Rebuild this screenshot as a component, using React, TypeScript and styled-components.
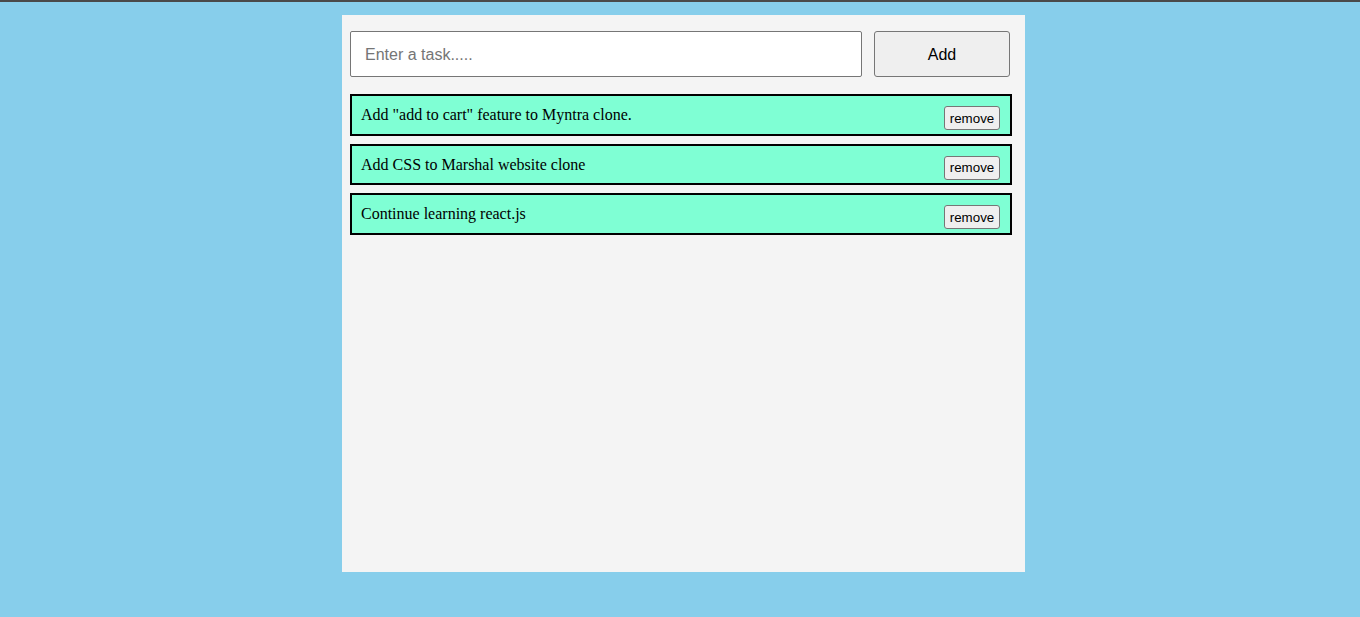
import React, { useState } from "react";
import styled, { createGlobalStyle } from "styled-components";

const GlobalStyle = createGlobalStyle`
  html, body {
    margin: 0;
    padding: 0;
    background: #87ceeb;
  }
  body {
    font-family: "Liberation Serif", "Times New Roman", serif;
  }
`;

const Page = styled.div`
  min-height: 617px;
  box-sizing: border-box;
  border-top: 2px solid #4a4a4a;
  padding-top: 13px;
  background: #87ceeb;
`;

const Panel = styled.div`
  width: 683px;
  height: 557px;
  margin-left: 342px;
  box-sizing: border-box;
  background: #f4f4f4;
  padding: 16px 15px 0 8px;
`;

const Form = styled.form`
  display: flex;
  gap: 12px;
  margin-bottom: 17px;
`;

const Input = styled.input`
  width: 512px;
  height: 46px;
  box-sizing: border-box;
  border: 1px solid #767676;
  border-radius: 2px;
  padding: 2px 14px 0;
  font-family: "Liberation Sans", Arial, sans-serif;
  font-size: 16px;
  color: #000;
  background: #fff;
  outline: none;
  &::placeholder {
    color: #757575;
  }
`;

const AddButton = styled.button`
  width: 136px;
  height: 46px;
  box-sizing: border-box;
  border: 1px solid #767676;
  border-radius: 3px;
  background: #efefef;
  padding: 2px 0 0;
  font-family: "Liberation Sans", Arial, sans-serif;
  font-size: 16px;
  color: #000;
  cursor: pointer;
`;

const List = styled.ul`
  list-style: none;
  margin: 0;
  padding: 0;
  width: 662px;
  display: flex;
  flex-direction: column;
  gap: 8px;
`;

const Item = styled.li`
  display: flex;
  justify-content: space-between;
  align-items: flex-start;
  box-sizing: border-box;
  border: 2px solid #000;
  background: #7fffd4;
  padding: 0 10px 3.5px 9px;
`;

const TaskText = styled.span`
  margin-top: 10px;
  font-family: "Liberation Serif", "Times New Roman", serif;
  font-size: 16px;
  line-height: 18px;
  color: #000;
`;

const RemoveButton = styled.button`
  margin-top: 10px;
  height: 24px;
  width: 56px;
  box-sizing: border-box;
  padding: 0;
  border: 1px solid #767676;
  border-radius: 3px;
  background: #efefef;
  font-family: "Liberation Sans", Arial, sans-serif;
  font-size: 13.33px;
  color: #000;
  cursor: pointer;
`;

const initialTasks = [
  'Add "add to cart" feature to Myntra clone.',
  "Add CSS to Marshal website clone",
  "Continue learning react.js",
];

export default function App() {
  const [tasks, setTasks] = useState<string[]>(initialTasks);
  const [value, setValue] = useState("");

  const add = (e: React.FormEvent) => {
    e.preventDefault();
    if (!value.trim()) return;
    setTasks([...tasks, value.trim()]);
    setValue("");
  };

  return (
    <>
      <GlobalStyle />
      <Page>
        <Panel>
          <Form onSubmit={add}>
            <Input
              placeholder="Enter a task....."
              value={value}
              onChange={(e) => setValue(e.target.value)}
            />
            <AddButton type="submit">Add</AddButton>
          </Form>
          <List>
            {tasks.map((t, i) => (
              <Item key={i}>
                <TaskText>{t}</TaskText>
                <RemoveButton
                  type="button"
                  onClick={() => setTasks(tasks.filter((_, j) => j !== i))}
                >
                  remove
                </RemoveButton>
              </Item>
            ))}
          </List>
        </Panel>
      </Page>
    </>
  );
}
